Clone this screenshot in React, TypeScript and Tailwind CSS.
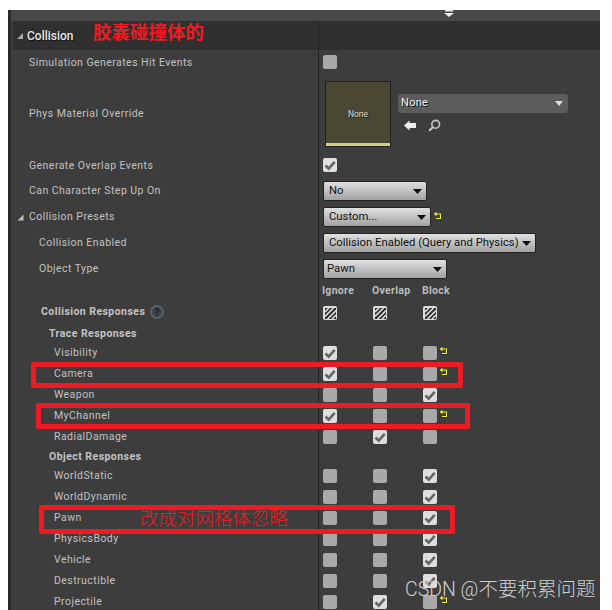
import React from 'react';

const font = { fontFamily: 'Roboto, "Noto Sans CJK SC", sans-serif' };

function Reset() {
  return (
    <svg width="8" height="8" viewBox="0 0 8 8" className="shrink-0">
      <path d="M2.5 0.5 L0.5 2 L2.5 3.5 M0.5 2 H6.5 V6.5 H2" fill="none" stroke="#f2f21c" strokeWidth="1.1" />
      <path d="M2 7.6 H7.6 V3" fill="none" stroke="#222" strokeWidth="0.7" />
    </svg>
  );
}

function Check({ state = 'off' }: { state?: 'off' | 'on' | 'mixed' }) {
  if (state === 'off') {
    return <div className="h-[14px] w-[14px] rounded-[2px] bg-[#a9a9a9]" />;
  }
  if (state === 'mixed') {
    return (
      <div className="flex h-[14px] w-[14px] items-center justify-center rounded-[2px] bg-[#dcdcdc]">
        <svg width="11" height="11" viewBox="0 0 11 11">
          <rect width="11" height="11" fill="#2e2e2e" />
          <path d="M0 4 L4 0 M0 8.5 L8.5 0 M2.5 11 L11 2.5 M7 11 L11 7" fill="none" stroke="#dcdcdc" strokeWidth="1.6" />
        </svg>
      </div>
    );
  }
  return (
    <div className="flex h-[14px] w-[14px] items-center justify-center rounded-[2px] bg-[#dedede]">
      <svg width="12" height="12" viewBox="0 0 12 12">
        <path d="M1.5 6.5 L4.7 9.6 L10.7 2.8" fill="none" stroke="#646464" strokeWidth="2.6" />
      </svg>
    </div>
  );
}

function Combo({ label, width, px = 'pl-[5px] pr-[4px]' }: { label: string; width: string; px?: string }) {
  return (
    <div
      className={`flex h-[20px] items-center justify-between rounded-[2px] border border-[#222] bg-gradient-to-b from-[#e0e0e0] to-[#a2a2a2] ${px} text-[11.3px] text-[#111] ${width}`}
    >
      <span className="whitespace-nowrap">{label}</span>
      <svg width="9" height="5" viewBox="0 0 9 5" className="shrink-0">
        <path d="M0 0 H9 L4.5 5 Z" fill="#111" />
      </svg>
    </div>
  );
}

function Row({
  h,
  indent,
  label,
  bold,
  children,
}: {
  h: string;
  indent: string;
  label?: React.ReactNode;
  bold?: boolean;
  children?: React.ReactNode;
}) {
  return (
    <div className={`flex ${h}`}>
      <div
        className={`flex w-[307px] shrink-0 items-center whitespace-nowrap text-[10.5px] tracking-[0.45px] ${indent} ${
          bold ? 'font-bold text-[#c4c4c4]' : 'text-[#c2c2c2]'
        }`}
      >
        {label}
      </div>
      <div className="flex flex-1 items-center border-l border-[#222] pl-[4px]">{children}</div>
    </div>
  );
}

function Responses({ a, b, c, reset }: { a?: boolean; b?: boolean; c?: boolean; reset?: boolean }) {
  return (
    <div className="flex items-center">
      <div className="w-[50px]"><Check state={a ? 'on' : 'off'} /></div>
      <div className="w-[50px]"><Check state={b ? 'on' : 'off'} /></div>
      <Check state={c ? 'on' : 'off'} />
      {reset && <div className="ml-[3px] -mt-[3px]"><Reset /></div>}
    </div>
  );
}

const traceRows = [
  { name: 'Visibility', a: true, reset: true },
  { name: 'Camera', a: true, reset: true },
  { name: 'Weapon', a: false, c: true },
  { name: 'MyChannel', a: true, reset: true },
  { name: 'RadialDamage', b: true },
];

const objectRows = [
  { name: 'WorldStatic', c: true },
  { name: 'WorldDynamic', c: true },
  { name: 'Pawn', c: true },
  { name: 'PhysicsBody', c: true },
  { name: 'Vehicle', c: true },
  { name: 'Destructible', c: true },
  { name: 'Projectile', b: true, reset: true },
];

function RedBox({ className }: { className: string }) {
  return <div className={`absolute rounded-[2px] border-[5px] border-[#ed1c24] ${className}`} />;
}

export default function App() {
  return (
    <div className="relative h-[610px] w-[612px] overflow-hidden bg-white" style={font}>
      <div className="absolute left-0 top-0 h-[610px] w-[612px] pb-0 pl-[8px] pr-[12px] pt-[10px]">
        <div className="flex h-[600px] overflow-hidden bg-[#3d3d3d]">
          <div className="w-[3px] shrink-0 bg-[#2a2a2a]" />
          <div className="min-w-0 flex-1">
            <div className="flex h-[11px] justify-center bg-[#484848] pl-[286px]">
              <svg width="10" height="7" viewBox="0 0 10 7">
                <path d="M1 0 H9 V1.5 H1 Z M0 3 H10 L5 7 Z" fill="#eee" />
              </svg>
            </div>
            <div className="ml-[2px] flex h-[29px] bg-[#303030]">
              <div className="flex w-[305px] items-center pl-[3px] pt-[1px] text-[12px] font-medium text-[#e6e6e6] [text-shadow:1px_1px_0_#111]">
                <svg width="8" height="8" viewBox="0 0 8 8" className="mr-[3px]">
                  <path d="M7 1 V7 H1 Z" fill="#a8a8a8" />
                </svg>
                Collision
              </div>
              <div className="border-l border-[#222]" />
            </div>

            <Row h="h-[25px]" indent="pl-[18px]" label="Simulation Generates Hit Events">
              <div className="-mt-[1px]"><Check /></div>
            </Row>
            <Row h="h-[78px]" indent="pl-[18px]" label="Phys Material Override">
              <div className="ml-[2px] flex items-center">
                <div className="flex h-[66px] w-[66px] flex-col border border-[#222] bg-[#4a4833]">
                  <div className="flex flex-1 items-center justify-center pt-[3px] text-[8.5px] text-[#d8d8d0] [text-shadow:1px_1px_0_#222]">
                    None
                  </div>
                  <div className="h-[3px] bg-[#d4cf87]" />
                </div>
                <div className="ml-[7px] mt-[-3px] flex w-[170px] flex-col">
                  <div className="flex h-[19px] items-center justify-between rounded-[3px] bg-[#5c5c5c] pl-[3px] pr-[5px] text-[11px] tracking-[0.3px] text-[#f0f0f0] [text-shadow:1px_1px_0_#111]">
                    None
                    <svg width="8" height="5" viewBox="0 0 8 5">
                      <path d="M0 0 H8 L4 5 Z" fill="#ddd" />
                    </svg>
                  </div>
                  <div className="ml-[6px] mt-[6px] flex items-center gap-[12px]">
                    <svg width="12" height="11" viewBox="0 0 12 11">
                      <path d="M0 5.5 L5.5 0.5 V3 H12 V8 H5.5 V10.5 Z" fill="#eee" />
                    </svg>
                    <svg width="13" height="13" viewBox="0 0 13 13">
                      <circle cx="7.7" cy="5.3" r="3.9" fill="none" stroke="#c8c8c8" strokeWidth="1.6" />
                      <path d="M5 8 L1.2 11.8" stroke="#c8c8c8" strokeWidth="2" />
                    </svg>
                  </div>
                </div>
              </div>
            </Row>
            <Row h="h-[25px]" indent="pl-[18px]" label="Generate Overlap Events">
              <div className="-mt-[1px]"><Check state="on" /></div>
            </Row>
            <Row h="h-[26px]" indent="pl-[18px]" label="Can Character Step Up On">
              <Combo label="No" width="w-[104px]" />
            </Row>
            <Row
              h="h-[26px]"
              indent="pl-[6px]"
              label={
                <>
                  <svg width="7" height="7" viewBox="0 0 7 7" className="mr-[5px]">
                    <path d="M6.5 0.5 V6.5 H0.5 Z" fill="#bdbdbd" />
                  </svg>
                  Collision Presets
                </>
              }
            >
              <Combo label="Custom..." width="w-[108px]" />
              <div className="ml-[3px] -mt-[2px]"><Reset /></div>
            </Row>
            <Row h="h-[26px]" indent="pl-[28px]" label="Collision Enabled">
              <Combo label="Collision Enabled (Query and Physics)" width="w-[213px]" />
            </Row>
            <Row h="h-[26px]" indent="pl-[28px]" label="Object Type">
              <Combo label="Pawn" width="w-[124px]" px="pl-[3px] pr-[4px]" />
            </Row>
            <Row h="h-[18px]" indent="pl-[28px]">
              <div className="flex text-[10.5px] font-bold tracking-[0.3px] text-[#bcbcbc]">
                <div className="w-[50px] -ml-[1px]">Ignore</div>
                <div className="w-[50px]">Overlap</div>
                <div>Block</div>
              </div>
            </Row>
            <Row
              h="h-[24px]"
              indent="pl-[30px]"
              bold
              label={
                <>
                  Collision Responses
                  <span className="ml-[5px] flex h-[14px] w-[14px] items-center justify-center rounded-full border-2 border-[#56606c] bg-[#3f444a] text-[10px] font-bold text-[#1c1c1c]">
                    ?
                  </span>
                </>
              }
            >
              <div className="mt-[2px] flex">
                <div className="w-[50px]"><Check state="mixed" /></div>
                <div className="w-[50px]"><Check state="mixed" /></div>
                <Check state="mixed" />
              </div>
            </Row>
            <Row h="h-[18px]" indent="pl-[38px] pt-[2px]" bold label="Trace Responses" />
            {traceRows.map((r) => (
              <Row key={r.name} h="h-[21px]" indent="pl-[43px]" label={r.name}>
                <Responses a={r.a} b={r.b} c={r.c} reset={r.reset} />
              </Row>
            ))}
            <Row h="h-[18px]" indent="pl-[38px] pt-[2px]" bold label="Object Responses" />
            {objectRows.map((r) => (
              <Row key={r.name} h="h-[21px]" indent="pl-[43px]" label={r.name}>
                <Responses b={r.b} c={r.c} reset={r.reset} />
              </Row>
            ))}
          </div>
        </div>
      </div>

      <RedBox className="left-[31px] top-[362px] h-[26px] w-[432px]" />
      <RedBox className="left-[36px] top-[403px] h-[26px] w-[434px]" />
      <RedBox className="left-[39px] top-[505px] h-[29px] w-[416px]" />
      <div className="absolute left-[93px] top-[21px] text-[18.5px] font-bold leading-[24px] text-[#ed1c24]">
        胶囊碰撞体的
      </div>
      <div className="absolute left-[140px] top-[507px] text-[18.5px] font-light leading-[24px] text-[#ed1c24]">
        改成对网格体忽略
      </div>
      <div className="absolute left-[405px] top-[578px] whitespace-nowrap text-[19.5px] font-light leading-[24px] text-[#d0d0d0]">
        CSDN @不要积累问题
      </div>
    </div>
  );
}
